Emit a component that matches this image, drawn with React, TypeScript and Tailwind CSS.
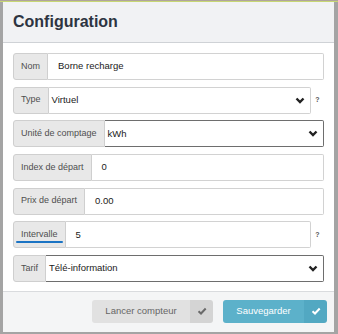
import React from 'react'

const Chevron = () => (
  <svg width="10" height="7" viewBox="0 0 10 7" className="shrink-0">
    <polyline points="1.5,1.5 5,5 8.5,1.5" fill="none" stroke="#222" strokeWidth="2.4" />
  </svg>
)

const Check = ({ color }: { color: string }) => (
  <svg width="10" height="8" viewBox="0 0 10 8">
    <polyline points="1.5,4.2 4,6.5 8.7,1.5" fill="none" stroke={color} strokeWidth="2" />
  </svg>
)

type Row = {
  label: string
  value: string
  kind: 'text' | 'select'
  dark?: boolean
  help?: boolean
  underline?: boolean
}

const rows: Row[] = [
  { label: 'Nom', value: 'Borne recharge', kind: 'text' },
  { label: 'Type', value: 'Virtuel', kind: 'select', help: true },
  { label: 'Unité de comptage', value: 'kWh', kind: 'select', dark: true },
  { label: 'Index de départ', value: '0', kind: 'text' },
  { label: 'Prix de départ', value: '0.00', kind: 'text' },
  { label: 'Intervalle', value: '5', kind: 'text', help: true, underline: true },
  { label: 'Tarif', value: 'Télé-information', kind: 'select', dark: true },
]

export default function App() {
  return (
    <div className="h-[334px] w-[338px] overflow-hidden bg-[#a4a4a4] font-['Liberation_Sans',Arial,sans-serif]">
      <div className="h-px bg-[#b0a49c]" />
      <div className="h-px bg-[#c7d774]" />
      <div className="ml-[3px] mr-[4px] flex flex-col bg-white">
        {/* Header */}
        <div className="flex h-[41px] items-center border-b border-[#cfd2d6] bg-[#f1f2f4] px-[10px]">
          <h1 className="text-[16px] font-bold text-[#2d3441]">Configuration</h1>
        </div>

        {/* Form */}
        <div className="flex flex-col gap-[6.67px] pb-[9px] pl-[10px] pr-[10px] pt-[10px]">
          {rows.map(row => (
            <div key={row.label} className="flex h-[27px] items-stretch">
              <div className="relative flex shrink-0 items-center rounded-l-[3px] border border-[#cfcfcf] bg-[#e8e8e8] px-[7px] text-[9px] text-[#4f4f4f]">
                {row.label}
                {row.underline && (
                  <div className="absolute bottom-[4px] left-[2px] right-[2px] h-[2px] rounded-full bg-[#1b74c4]" />
                )}
              </div>
              <div
                className={`flex min-w-0 flex-1 items-center rounded-r-[2px] border border-l-0 text-[9.5px] text-[#1a1a1a] ${
                  row.dark ? 'border-[#6e6e6e] border-l' : 'border-[#d2d2d2]'
                } ${row.kind === 'select' ? 'justify-between pl-[3px] pr-[5px]' : 'pl-[10px]'}`}
              >
                <span>{row.value}</span>
                {row.kind === 'select' && <Chevron />}
              </div>
              {row.help && (
                <div className="flex w-[13px] shrink-0 items-center justify-center text-[7px] font-bold text-[#555]">
                  ?
                </div>
              )}
            </div>
          ))}
        </div>

        {/* Footer */}
        <div className="flex h-[41px] items-start justify-end gap-[10px] border-t border-[#d9dbde] bg-[#f4f5f6] pr-[7px] pt-[8px]">
          <div className="flex h-[23px] overflow-hidden rounded-[3px] text-[9.5px]">
            <div className="flex w-[98px] items-center justify-center bg-[#e1e1e1] text-[#666]">
              Lancer compteur
            </div>
            <div className="flex w-[23px] items-center justify-center bg-[#d4d4d4]">
              <Check color="#6a6a6a" />
            </div>
          </div>
          <div className="flex h-[23px] overflow-hidden rounded-[3px] text-[9.5px]">
            <div className="flex w-[81px] items-center justify-center bg-[#5cb1ca] text-white">
              Sauvegarder
            </div>
            <div className="flex w-[23px] items-center justify-center bg-[#52a8c2]">
              <Check color="#ffffff" />
            </div>
          </div>
        </div>
      </div>
    </div>
  )
}
